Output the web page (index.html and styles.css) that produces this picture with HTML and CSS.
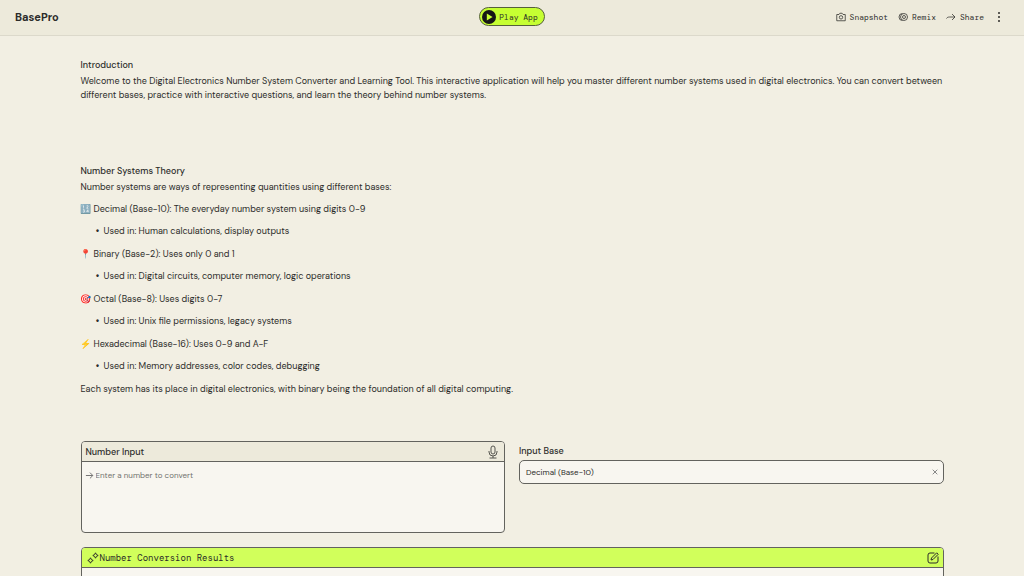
FILE: index.html
```html
<!DOCTYPE html>
<html lang="en">
<head>
<meta charset="utf-8">
<meta name="viewport" content="width=device-width, initial-scale=1">
<title>BasePro</title>
<link rel="stylesheet" href="styles.css">
</head>
<body>
<header class="topbar">
  <div class="brand">BasePro</div>
  <button class="play" type="button">
    <svg class="play-icon" viewBox="0 0 14 14" aria-hidden="true"><circle cx="7" cy="7" r="7" fill="#161616"/><path d="M4.800 3.500 10.600 7l-5.800 3.500z" fill="#c6ff32"/></svg>
    Play App
  </button>
  <nav class="actions" aria-label="App actions">
    <button class="action" type="button">
      <svg class="icon-sm" viewBox="0 0 20 20" aria-hidden="true"><path d="M1.500 5H6l1.700-2.500h4.600L14 5h4.500v12.500h-17z"/><circle cx="10" cy="10.700" r="3.400"/></svg>
      Snapshot
    </button>
    <button class="action" type="button">
      <svg class="icon-sm" viewBox="0 0 20 20" aria-hidden="true"><path d="M9 3a7 7 0 1 0 0 14"/><circle cx="12" cy="10" r="7"/><circle cx="12" cy="10" r="3"/></svg>
      Remix
    </button>
    <button class="action" type="button">
      <svg class="icon-sm" viewBox="0 0 20 20" aria-hidden="true"><path d="M1 13c1-2 3-3 6-3h11M12 4l6 6-6 6"/></svg>
      Share
    </button>
    <button class="more" type="button" aria-label="More options">
      <svg viewBox="0 0 4 12" aria-hidden="true"><circle cx="2" cy="2" r="1"/><circle cx="2" cy="6" r="1"/><circle cx="2" cy="10" r="1"/></svg>
    </button>
  </nav>
</header>

<main class="page">
  <section class="intro">
    <h2 class="heading">Introduction</h2>
    <p class="text">Welcome to the Digital Electronics Number System Converter and Learning Tool. This interactive application will help you master different number systems used in digital electronics. You can convert between different bases, practice with interactive questions, and learn the theory behind number systems.</p>
  </section>

  <section class="theory">
    <h2 class="heading">Number Systems Theory</h2>
    <p class="text">Number systems are ways of representing quantities using different bases:</p>
    <p class="text"><span class="emoji">🔢</span>Decimal (Base-10): The everyday number system using digits 0-9</p>
    <ul class="uses"><li>Used in: Human calculations, display outputs</li></ul>
    <p class="text"><span class="emoji">📍</span>Binary (Base-2): Uses only 0 and 1</p>
    <ul class="uses"><li>Used in: Digital circuits, computer memory, logic operations</li></ul>
    <p class="text"><span class="emoji">🎯</span>Octal (Base-8): Uses digits 0-7</p>
    <ul class="uses"><li>Used in: Unix file permissions, legacy systems</li></ul>
    <p class="text"><span class="emoji">⚡</span>Hexadecimal (Base-16): Uses 0-9 and A-F</p>
    <ul class="uses"><li>Used in: Memory addresses, color codes, debugging</li></ul>
    <p class="text">Each system has its place in digital electronics, with binary being the foundation of all digital computing.</p>
  </section>

  <form class="inputs">
    <div class="card">
      <div class="card-head">
        <label class="label" for="number">Number Input</label>
        <button class="icon-button" type="button" aria-label="Dictate">
          <svg class="mic" viewBox="0 0 12 14" aria-hidden="true"><rect x="4" y="1" width="4" height="8" rx="2"/><path d="M2 6v1a4 4 0 0 0 8 0V6M6 11v2M2.500 13h7"/></svg>
        </button>
      </div>
      <div class="entry">
        <svg class="arrow" viewBox="0 0 10 10" aria-hidden="true"><path d="M1 5h7.500M5.500 1.800 8.700 5 5.500 8.200"/></svg>
        <textarea class="area" id="number" placeholder="Enter a number to convert"></textarea>
      </div>
    </div>
    <div class="base">
      <label class="label" for="base">Input Base</label>
      <div class="select-box">
        <select class="select" id="base"><option>Decimal (Base-10)</option><option>Binary (Base-2)</option><option>Octal (Base-8)</option><option>Hexadecimal (Base-16)</option></select>
        <button class="icon-button" type="button" aria-label="Clear">
          <svg class="clear" viewBox="0 0 6 6" aria-hidden="true"><path d="M.7.7l4.600 4.600M5.300.7.7 5.300"/></svg>
        </button>
      </div>
    </div>
  </form>

  <section class="card results">
    <div class="results-head">
      <svg class="sparkles" viewBox="0 0 12 12" aria-hidden="true"><path d="M8.500.8Q9 3 11.200 3.500 9 4 8.500 6.200 8 4 5.800 3.500 8 3 8.500.8zM3.500 5.800Q4 8 6.200 8.500 4 9 3.500 11.200 3 9 .8 8.500 3 8 3.500 5.800z"/></svg>
      <h2 class="results-title">Number Conversion Results</h2>
      <button class="icon-button" type="button" aria-label="Edit">
        <svg class="edit" viewBox="0 0 12 12" aria-hidden="true"><path d="M7.500 1H3a2 2 0 0 0-2 2v6a2 2 0 0 0 2 2h6a2 2 0 0 0 2-2V4.500M4 8l.5-2L9.700.8l1.500 1.500L6 7.500z"/></svg>
      </button>
    </div>
    <div class="results-body"></div>
  </section>
</main>
</body>
</html>
```
FILE: styles.css
```css
* { box-sizing: border-box; }

body {
  margin: 0;
  background: #f2efe3;
  color: #2c2c2a;
  font-family: "DM Sans", "Open Sans", sans-serif;
  font-size: 9px;
  line-height: 14px;
}

button {
  border: 0;
  padding: 0;
  background: none;
  color: inherit;
  font: inherit;
}

svg { display: block; flex: none; fill: none; stroke: currentColor; stroke-width: 1; }

.topbar {
  display: grid;
  grid-template-columns: 1fr auto 1fr;
  align-items: center;
  height: 36px;
  padding: 0 23px 2px 15px;
  background: #edeadb;
  border-bottom: 1px solid #dcd9cb;
}

.brand { font-size: 11px; font-weight: 700; line-height: 16px; }

.play {
  display: flex;
  align-items: center;
  gap: 3px;
  height: 19px;
  margin-left: 8px;
  padding: 0 6px 0 2px;
  border: 1px solid #55603a;
  border-radius: 10px;
  background: #c6ff32;
  font-family: "DM Mono", "Liberation Mono", monospace;
  font-size: 8px;
}

.play-icon { width: 14px; height: 14px; stroke: none; }

.actions {
  display: flex;
  align-items: center;
  justify-content: flex-end;
  gap: 10px;
  font-family: "DM Mono", "Liberation Mono", monospace;
  font-size: 8px;
}

.action { display: flex; align-items: center; gap: 4px; }
.icon-sm { width: 10px; height: 10px; stroke-width: 1.5; }
.more { margin-left: 3px; }
.more svg { width: 4px; height: 12px; fill: currentColor; stroke: none; }

.page {
  max-width: 879px;
  margin: 0 auto;
  padding: 21px 8px;
}

.heading, .label {
  margin: 0 0 1px;
  font-size: 9px;
  font-weight: 500;
  line-height: 16px;
}

.label { margin: 0; }

.text { margin: 0 0 8px; }
.intro { margin-bottom: 61px; }
.theory { margin-bottom: 45px; }
.intro .text { margin: 0; }

.emoji {
  display: inline-block;
  width: 13px;
  font-family: "Noto Color Emoji", sans-serif;
  line-height: 0;
}

.uses { margin: 0 0 9px; padding-left: 23px; }

.uses li::marker { content: "•\00a0\00a0"; font-weight: 700; }

.inputs {
  display: grid;
  grid-template-columns: 1fr 1fr;
  align-items: start;
  gap: 14px;
  margin-bottom: 14px;
}

.card {
  overflow: hidden;
  border: 1px solid #63635e;
  border-radius: 4px;
  background: #f8f6f0;
}

.card-head {
  display: flex;
  align-items: center;
  justify-content: space-between;
  height: 20px;
  padding: 0 5px 0 4px;
  border-bottom: 1px solid #63635e;
  background: #edeadb;
}

.mic { width: 12px; height: 14px; color: #55554f; }
.entry { display: flex; gap: 2px; padding: 6px 3px; }
.arrow { width: 9px; height: 9px; margin-top: 3px; color: #666; }

.area {
  flex: 1;
  height: 58px;
  border: 0;
  padding: 0;
  outline: 0;
  resize: none;
  background: none;
  color: inherit;
  font: inherit;
  font-size: 8px;
}

.area::placeholder { color: #73736f; }

.base { padding-top: 2px; }

.select-box {
  display: flex;
  align-items: center;
  height: 24px;
  margin-top: 1px;
  padding: 0 5px 0 6px;
  border: 1px solid #63635e;
  border-radius: 5px;
  background: #f8f6f0;
}

.select {
  flex: 1;
  appearance: none;
  border: 0;
  padding: 0;
  outline: 0;
  background: none;
  color: inherit;
  font: inherit;
  font-size: 8px;
}

.clear { width: 6px; height: 6px; color: #888; }

.results-head {
  display: flex;
  align-items: center;
  gap: 1px;
  height: 20px;
  padding: 0 4px 0 5px;
  border-bottom: 1px solid #63635e;
  background: #d1ff5b;
}

.results-title {
  flex: 1;
  margin: 0;
  font: 400 9px/16px "DM Mono", "Liberation Mono", monospace;
}

.sparkles, .edit { width: 12px; height: 12px; }
.results-body { min-height: 60px; }
```
